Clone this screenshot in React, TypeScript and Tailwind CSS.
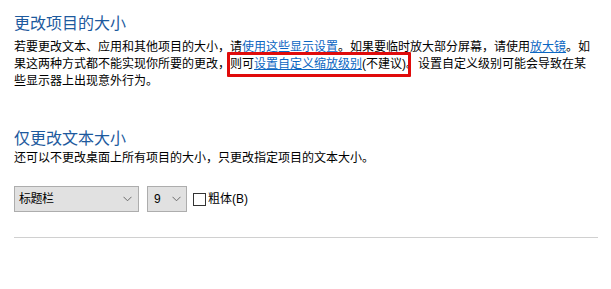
import React from "react";

const font = { fontFamily: '"Liberation Sans", "Noto Sans CJK SC", sans-serif' };

function Chevron() {
  return (
    <svg width="9" height="6" viewBox="0 0 9 6" className="shrink-0">
      <path d="M0.5 0.8 L4.5 4.8 L8.5 0.8" fill="none" stroke="#6b6b6b" strokeWidth="1" />
    </svg>
  );
}

export default function App() {
  return (
    <div
      className="w-[611px] h-[289px] bg-white overflow-hidden pl-[14px] pr-[13px] text-black"
      style={font}
    >
      <h1 className="pt-[13px] text-[16px] leading-[22px] text-[#1d5a9e] font-normal">更改项目的大小</h1>
      <div className="mt-[3.5px] text-[12px] leading-[17px]">
        <span className="block whitespace-nowrap">
          若要更改文本、应用和其他项目的大小，请
          <a className="text-[#0b66c2] underline">使用这些显示设置</a>
          。如果要临时放大部分屏幕，请使用
          <a className="text-[#0b66c2] underline">放大镜</a>
          。如
        </span>
        <span className="block whitespace-nowrap">
          果这两种方式都不能实现你所要的更改，
          <span className="relative">
            则可<a className="text-[#0b66c2] underline">设置自定义缩放级别</a>(不建议)
            <span className="absolute -top-[5px] -bottom-[6px] -left-[3px] -right-[5px] border-[3px] border-[#e00b0b] rounded-[1px]" />
          </span>
          。设置自定义级别可能会导致在某
        </span>
        <span className="block whitespace-nowrap">些显示器上出现意外行为。</span>
      </div>

      <h2 className="mt-[38px] text-[16px] leading-[22px] text-[#1d5a9e] font-normal">仅更改文本大小</h2>
      <p className="text-[12px] leading-[17px] whitespace-nowrap">
        还可以不更改桌面上所有项目的大小，只更改指定项目的文本大小。
      </p>

      <div className="mt-[19.5px] flex items-center gap-[8px] h-[26px]">
        <div className="w-[125px] h-[26px] bg-[#e1e1e1] border border-[#adadad] flex items-center justify-between pl-[4px] pr-[6px]">
          <span className="text-[12px] tracking-[-0.5px]">标题栏</span>
          <Chevron />
        </div>
        <div className="w-[40px] h-[26px] bg-[#e1e1e1] border border-[#adadad] flex items-center justify-between pl-[6px] pr-[5px]">
          <span className="text-[12px]">9</span>
          <Chevron />
        </div>
        <label className="flex items-center gap-[2px] -ml-[2px]">
          <span className="w-[13px] h-[13px] border border-[#333] bg-white" />
          <span className="text-[12px]">粗体(B)</span>
        </label>
      </div>

      <div className="mt-[25px] h-px bg-[#d0d0d0] w-[584px]" />
    </div>
  );
}
